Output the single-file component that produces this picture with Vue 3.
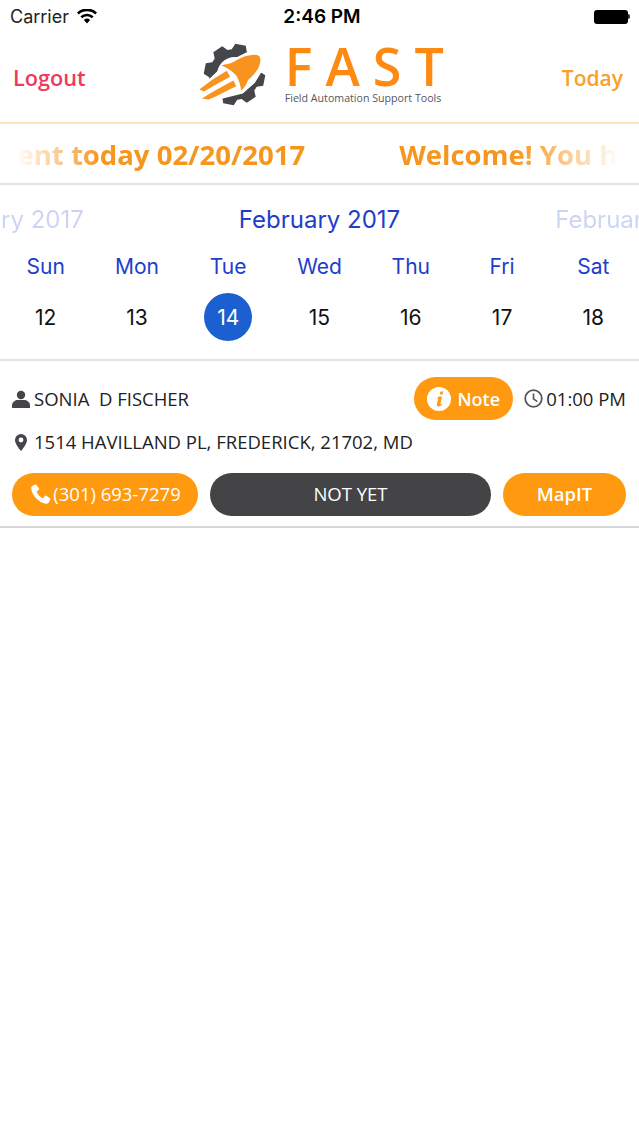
<template>
  <div class="screen">
    <div class="status-bar">
      <div class="status-left">
        <span>Carrier</span>
        <svg class="wifi" width="20" height="15" viewBox="0 0 20 15">
          <path d="M10 14.500 6.900 11a4.600 4.600 0 0 1 6.200 0zM5.200 9.200 3.400 7.200a9.800 9.800 0 0 1 13.200 0l-1.800 2a7.100 7.100 0 0 0-9.600 0zM1.800 5.400 0 3.400a14.800 14.800 0 0 1 20 0l-1.800 2a12.200 12.200 0 0 0-16.400 0z" fill="#000" />
        </svg>
      </div>
      <div class="status-time">2:46 PM</div>
      <div class="status-right">
        <div class="battery"></div>
        <div class="battery-tip"></div>
      </div>
    </div>

    <header class="app-header">
      <a class="link-logout">Logout</a>
      <div class="brand">
        <svg class="brand-mark" width="72" height="67" viewBox="35 15 215 200">
          <path :d="gearPath" fill="#44464a" />
          <circle cx="147" cy="115" r="52" fill="#fff" />
          <path d="M25 172 125 78 185 48 245 30 243 82 208 140 172 172 100 190 58 212z" fill="#fff" />
          <path d="M108 88C120 84 134 84 144 78 160 66 190 54 212 56 226 58 226 72 222 86 216 106 200 120 187 132 183 144 176 156 167 163 165 148 160 128 150 116 140 104 124 94 108 88z" fill="#f7931e" />
          <path d="M42 160C70 138 96 120 124 104L134 122C108 136 84 150 56 166z" fill="#f7931e" />
          <path d="M50 187C82 166 112 150 144 133L152 150C122 164 98 178 70 190z" fill="#f7931e" />
        </svg>
        <div class="brand-text">
          <div class="brand-name">FAST</div>
          <div class="brand-tagline">Field Automation Support Tools</div>
        </div>
      </div>
      <a class="link-today">Today</a>
    </header>

    <div class="ticker">
      <div class="ticker-fade">
        <div class="ticker-track">
          <span>Welcome! You have 1 appointment today 02/20/2017</span>
          <span>Welcome! You have 1 appointment today 02/20/2017</span>
        </div>
      </div>
    </div>

    <section class="calendar">
      <div class="month-row">
        <span class="month month--side month--prev">January 2017</span>
        <span class="month">February 2017</span>
        <span class="month month--side">February 2017</span>
      </div>
      <div class="week">
        <div v-for="day in days" :key="day.name" class="day">
          <div class="day-name">{{ day.name }}</div>
          <div class="day-num" :class="{ 'is-active': day.num === 14 }">{{ day.num }}</div>
        </div>
      </div>
    </section>

    <article class="job">
      <div class="job-top">
        <div class="job-name">
          <svg width="18" height="18" viewBox="0 0 18 18">
            <circle cx="9" cy="5" r="4.200" fill="#44464a" />
            <path d="M0 18v-2.600C0 12 3.400 10 6 10h6c2.600 0 6 2 6 5.400V18z" fill="#44464a" />
          </svg>
          <span class="name-text">SONIA&nbsp; D FISCHER</span>
        </div>
        <button type="button" class="pill pill-note">
          <svg width="24" height="24" viewBox="0 0 24 24">
            <circle cx="12" cy="12" r="12" fill="#fff" />
            <path d="M13.400 4.600h2.800l-.6 2.800h-2.800zM12 9.400h3L13.300 17c-.1.500.3.600.7.400l.8-.5.300.9c-1.200 1.200-2.400 1.700-3.500 1.700-1.300 0-2-.8-1.700-2.200l1.200-5.500c.1-.5-.3-.7-1.200-.7z" fill="#ff9910" />
          </svg>
          <span>Note</span>
        </button>
        <div class="job-time">
          <svg width="19" height="19" viewBox="0 0 19 19">
            <circle cx="9.500" cy="9.500" r="8.300" fill="none" stroke="#55575b" stroke-width="1.800" />
            <path d="M9.500 4.500v5.300l3.800 2.800" fill="none" stroke="#55575b" stroke-width="1.600" />
          </svg>
          <span>01:00 PM</span>
        </div>
      </div>

      <div class="job-address">
        <svg width="12" height="17" viewBox="0 0 12 17">
          <path fill-rule="evenodd" d="M6 0a6 6 0 0 1 6 6c0 3.500-3.800 8.500-6 11C3.800 14.500 0 9.500 0 6a6 6 0 0 1 6-6zm0 3.600a2.400 2.400 0 1 0 0 4.800 2.400 2.400 0 0 0 0-4.800z" fill="#44464a" />
        </svg>
        <span>1514 HAVILLAND PL, FREDERICK, 21702, MD</span>
      </div>

      <div class="job-actions">
        <button type="button" class="pill pill-phone">
          <svg width="20" height="20" viewBox="0 0 20 20">
            <path d="M4.300.6 1.300 2C.4 2.500 0 3.500.2 4.800c.8 6.800 7.800 14 14.600 15 1.200.2 2.200-.2 2.800-1.100l1.800-3.200c.2-.4 0-.9-.4-1.200l-3.900-2.500c-.4-.3-.9-.2-1.200.1l-1.600 1.800c-.3.300-.7.400-1.100.2-2.100-1.100-4.200-3.400-5.300-5.500-.2-.4-.1-.8.200-1.100l1.700-1.500c.3-.3.400-.8.200-1.200L5.500.9C5.200.5 4.700.4 4.300.6z" fill="#fff" />
          </svg>
          <span>(301) 693-7279</span>
        </button>
        <button type="button" class="pill pill-status">NOT YET</button>
        <button type="button" class="pill pill-map">MapIT</button>
      </div>
    </article>
  </div>
</template>

<script setup>
const days = [
  { name: 'Sun', num: 12 },
  { name: 'Mon', num: 13 },
  { name: 'Tue', num: 14 },
  { name: 'Wed', num: 15 },
  { name: 'Thu', num: 16 },
  { name: 'Fri', num: 17 },
  { name: 'Sat', num: 18 }
]

// eight teeth around the hub of the logo
function buildGear(cx, cy, outer, inner, teeth) {
  const step = (Math.PI * 2) / teeth
  const pts = []
  for (let i = 0; i < teeth; i++) {
    const a = i * step + 0.2
    const offsets = [[-0.3, inner], [-0.17, outer], [0.17, outer], [0.3, inner]]
    for (const [o, r] of offsets) {
      const t = a + o * step * 1.3
      pts.push(`${(cx + Math.cos(t) * r).toFixed(1)} ${(cy + Math.sin(t) * r).toFixed(1)}`)
    }
  }
  return `M${pts.join('L')}z`
}

const gearPath = buildGear(147, 115, 92, 76, 8)
</script>

<style scoped>
.screen {
  width: 639px;
  height: 1136px;
  background: #fff;
  overflow: hidden;
  font-family: "Open Sans", "Noto Sans", sans-serif;
  color: #222;
}

.status-bar {
  height: 33px;
  padding: 0 9px 0 10px;
  display: grid;
  grid-template-columns: 1fr auto 1fr;
  align-items: center;
  font-family: "Inter", "Liberation Sans", sans-serif;
  color: #000;
}

.status-left {
  display: flex;
  align-items: center;
  gap: 8px;
  font-size: 18px;
  color: #222;
}

.status-time {
  padding-left: 4px;
  font-size: 19px;
  font-weight: 600;
}

.status-right {
  display: flex;
  justify-content: flex-end;
  align-items: center;
}

.battery {
  width: 34px;
  height: 14px;
  border-radius: 3px;
  background: #000;
}

.battery-tip {
  width: 2px;
  height: 5px;
  background: #333;
  border-radius: 0 2px 2px 0;
}

.app-header {
  height: 91px;
  padding: 0 16px 0 13px;
  display: flex;
  align-items: center;
  justify-content: space-between;
  border-bottom: 2px solid #fde3b8;
  box-sizing: border-box;
  font-size: 21px;
  font-weight: 600;
}

.link-logout {
  color: #f0395c;
  font-size: 21.700px;
  font-weight: 600;
  margin-top: -1px;
}

.link-today {
  color: #f9a02a;
}

.brand {
  display: flex;
  align-items: flex-start;
  gap: 16px;
  margin-top: -6px;
  margin-left: -9px;
}

.brand-text {
  width: 157px;
  margin-top: 2px;
  font-weight: 400;
}

.brand-name {
  font-size: 52px;
  line-height: 46px;
  font-weight: 600;
  letter-spacing: 13px;
  color: #ff8a12;
}

.brand-tagline {
  font-size: 10.650px;
  line-height: 14px;
  color: #55575b;
  white-space: nowrap;
  margin-top: 2px;
}

.ticker {
  height: 61px;
  border-bottom: 2px solid #e2e2e4;
  box-sizing: border-box;
}

.ticker-fade {
  overflow: hidden;
  -webkit-mask-image: linear-gradient(90deg, transparent 16px, #000 100px, #000 515px, transparent 620px);
  mask-image: linear-gradient(90deg, transparent 16px, #000 100px, #000 515px, transparent 620px);
}

.ticker-track {
  display: flex;
  gap: 94px;
  margin-left: -413px;
  white-space: nowrap;
  font-size: 27.500px;
  font-weight: 700;
  line-height: 62px;
  color: #f7961e;
}

.ticker-track span {
  flex-shrink: 0;
}

.calendar {
  height: 176px;
  border-bottom: 2px solid #e2e2e4;
  box-sizing: border-box;
  font-family: "Inter", "Liberation Sans", sans-serif;
}

.month-row {
  display: grid;
  grid-template-columns: minmax(0, 1fr) auto minmax(0, 1fr);
  column-gap: 155px;
  padding-top: 19px;
  overflow: hidden;
  font-size: 24px;
  line-height: 32px;
  color: #1d3ecb;
  white-space: nowrap;
}

.month--prev {
  justify-self: end;
}

.month--side {
  opacity: 0.22;
}

.week {
  display: grid;
  grid-template-columns: repeat(7, 1fr);
  margin-top: 16px;
}

.day {
  display: flex;
  flex-direction: column;
  align-items: center;
  gap: 11px;
}

.day-name {
  font-size: 21px;
  line-height: 30px;
  color: #1d3ecb;
}

.day-num {
  width: 48px;
  height: 48px;
  border-radius: 50%;
  display: flex;
  align-items: center;
  justify-content: center;
  font-size: 21px;
  color: #111;
}

.day-num.is-active {
  background: #1c5fd0;
  color: #fff;
}

.job {
  padding: 16px 13px 0 12px;
  height: 167px;
  border-bottom: 2px solid #d8d8da;
  box-sizing: border-box;
  font-size: 18.500px;
  color: #222;
}

.job-top {
  display: flex;
  align-items: center;
}

.job-name {
  display: flex;
  align-items: center;
  gap: 4px;
  flex: 1;
}

.job-time {
  display: flex;
  align-items: center;
  gap: 3px;
  margin-left: 11px;
}

.job-address {
  display: flex;
  align-items: center;
  gap: 7px;
  padding-left: 3px;
  margin-top: 10px;
  line-height: 24px;
}

.job-actions {
  display: flex;
  gap: 12px;
  margin-top: 19px;
}

.pill {
  height: 43px;
  border: 0;
  border-radius: 22px;
  padding: 0;
  display: flex;
  align-items: center;
  justify-content: center;
  font-family: inherit;
  font-size: 18.500px;
  color: #fff;
  background: #ff9910;
}

.job-actions .pill {
  padding-bottom: 2px;
}

.pill-note {
  width: 99px;
  gap: 6px;
  font-size: 18px;
  font-weight: 600;
}

.pill-phone {
  width: 186px;
  gap: 2px;
  padding-left: 2px;
}

.pill-status {
  width: 281px;
  background: #444447;
}

.pill-map {
  width: 123px;
  font-weight: 600;
}
</style>

<style>
html,
body {
  margin: 0;
  background: #fff;
}
</style>
